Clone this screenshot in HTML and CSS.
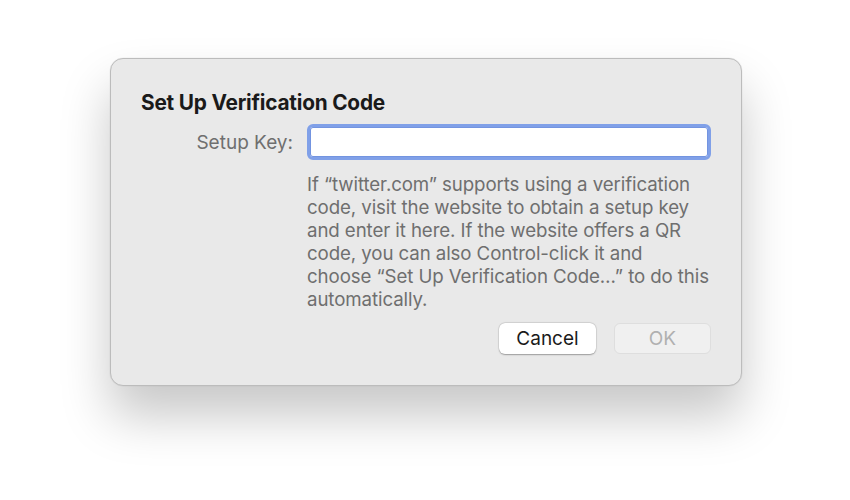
FILE: index.html
```html
<!DOCTYPE html>
<html>
<head>
<meta charset="utf-8">
<link rel="stylesheet" href="styles.css">
</head>
<body>
<div class="stage">
  <div class="dialog">
    <h1 class="title">Set Up Verification Code</h1>
    <div class="form">
      <label class="label" for="key">Setup Key:</label>
      <div class="field"><input id="key" class="input" type="text"></div>
      <p class="help">If “twitter.com” supports using a verification<br>code, visit the website to obtain a setup key<br>and enter it here. If the website offers a QR<br>code, you can also Control-click it and<br>choose “Set Up Verification Code…” to do this<br>automatically.</p>
    </div>
    <div class="buttons">
      <button class="btn cancel">Cancel</button>
      <button class="btn ok" disabled>OK</button>
    </div>
  </div>
</div>
</body>
</html>
```
FILE: styles.css
```css
html, body {
  margin: 0;
  padding: 0;
  background: #ffffff;
}
body {
  width: 850px;
  height: 500px;
  overflow: hidden;
  font-family: Inter, "Liberation Sans", sans-serif;
}
.stage {
  padding: 58px 0 0 110px;
}
.dialog {
  box-sizing: border-box;
  width: 632px;
  height: 328px;
  background: #e9e9e9;
  border: 1px solid #bcbcbc;
  border-radius: 13px;
  box-shadow: 0 30px 50px rgba(0, 0, 0, 0.22), 0 0 0 0.5px rgba(0,0,0,0.05);
  padding: 32px 30px 0 30px;
}
.title {
  margin: 0;
  font-size: 20.8px;
  font-weight: 700;
  color: #1a1a1a;
  line-height: 24px;
  letter-spacing: -0.2px;
}
.form {
  display: grid;
  grid-template-columns: 152px 404px;
  column-gap: 14px;
  margin-top: 9px;
  align-items: center;
}
.label {
  text-align: right;
  font-size: 19px;
  color: #6f6f6f;
}
.field {
  height: 36px;
}
.input {
  box-sizing: border-box;
  width: 404px;
  height: 36px;
  margin: 0;
  border: 3px solid #80a0e8;
  border-radius: 6px;
  background: #ffffff;
  outline: none;
  box-shadow: inset 0 0 0 1px #7394e0;
}
.help {
  grid-column: 2;
  margin: 13px 0 0 0;
  font-size: 18.7px;
  line-height: 23px;
  color: #6f6f6f;
  white-space: nowrap;
  letter-spacing: -0.1px;
}
.buttons {
  display: flex;
  justify-content: flex-end;
  gap: 18px;
  margin-top: 12px;
}
.btn {
  box-sizing: border-box;
  width: 97px;
  height: 31px;
  border-radius: 6px;
  font-family: Inter, "Liberation Sans", sans-serif;
  font-size: 19px;
  padding: 0;
}
.cancel {
  background: #ffffff;
  border: none;
  color: #1a1a1a;
  box-shadow: 0 0.5px 1.5px rgba(0,0,0,0.3), 0 0 0 0.5px rgba(0,0,0,0.08);
}
.ok {
  background: #f0f0f0;
  border: 1px solid #dedede;
  color: #b0b0b0;
}
```
